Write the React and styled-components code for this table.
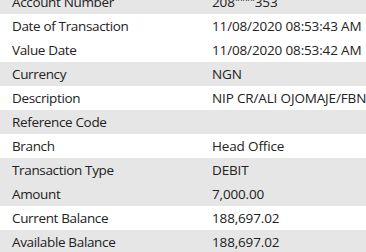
import React from "react";
import styled, { createGlobalStyle } from "styled-components";

const GlobalStyle = createGlobalStyle`
  html, body {
    margin: 0;
    padding: 0;
    background: #ffffff;
  }
  body {
    font-family: "Open Sans", "Liberation Sans", sans-serif;
    color: #222222;
  }
`;

const rows = [
  { label: "Account Number", value: "208****353", masked: true, shaded: true },
  { label: "Date of Transaction", value: "11/08/2020 08:53:43 AM" },
  { label: "Value Date", value: "11/08/2020 08:53:42 AM" },
  { label: "Currency", value: "NGN", shaded: true },
  { label: "Description", value: "NIP CR/ALI OJOMAJE/FBN" },
  { label: "Reference Code", value: "", shaded: true },
  { label: "Branch", value: "Head Office" },
  { label: "Transaction Type", value: "DEBIT", shaded: true },
  { label: "Amount", value: "7,000.00", shaded: true },
  { label: "Current Balance", value: "188,697.02" },
  { label: "Available Balance", value: "188,697.02", shaded: true },
];

const Viewport = styled.div`
  width: 366px;
  height: 252px;
  overflow: hidden;
`;

const Table = styled.div`
  margin-top: -10px;
  display: flex;
  flex-direction: column;
`;

const Row = styled.div`
  display: grid;
  grid-template-columns: 200px 1fr;
  align-items: center;
  height: 24px;
  padding-left: 12px;
  background: ${(p) => (p.$shaded ? "#e6e6e6" : "#ffffff")};
  font-size: 13.5px;
  white-space: nowrap;
`;

const Label = styled.span`
  letter-spacing: -0.35px;
`;

const Value = styled.span`
  letter-spacing: -0.15px;
`;

const Mask = styled.span`
  font-size: 10px;
  letter-spacing: -0.5px;
  vertical-align: 3px;
`;

function MaskedNumber({ value }) {
  const head = value.slice(0, 3);
  const tail = value.slice(-3);
  return (
    <>
      {head}
      <Mask>{value.slice(3, -3)}</Mask>
      {tail}
    </>
  );
}

export default function App() {
  return (
    <>
      <GlobalStyle />
      <Viewport>
        <Table>
          {rows.map((r) => (
            <Row key={r.label} $shaded={r.shaded}>
              <Label>{r.label}</Label>
              <Value>{r.masked ? <MaskedNumber value={r.value} /> : r.value}</Value>
            </Row>
          ))}
        </Table>
      </Viewport>
    </>
  );
}
